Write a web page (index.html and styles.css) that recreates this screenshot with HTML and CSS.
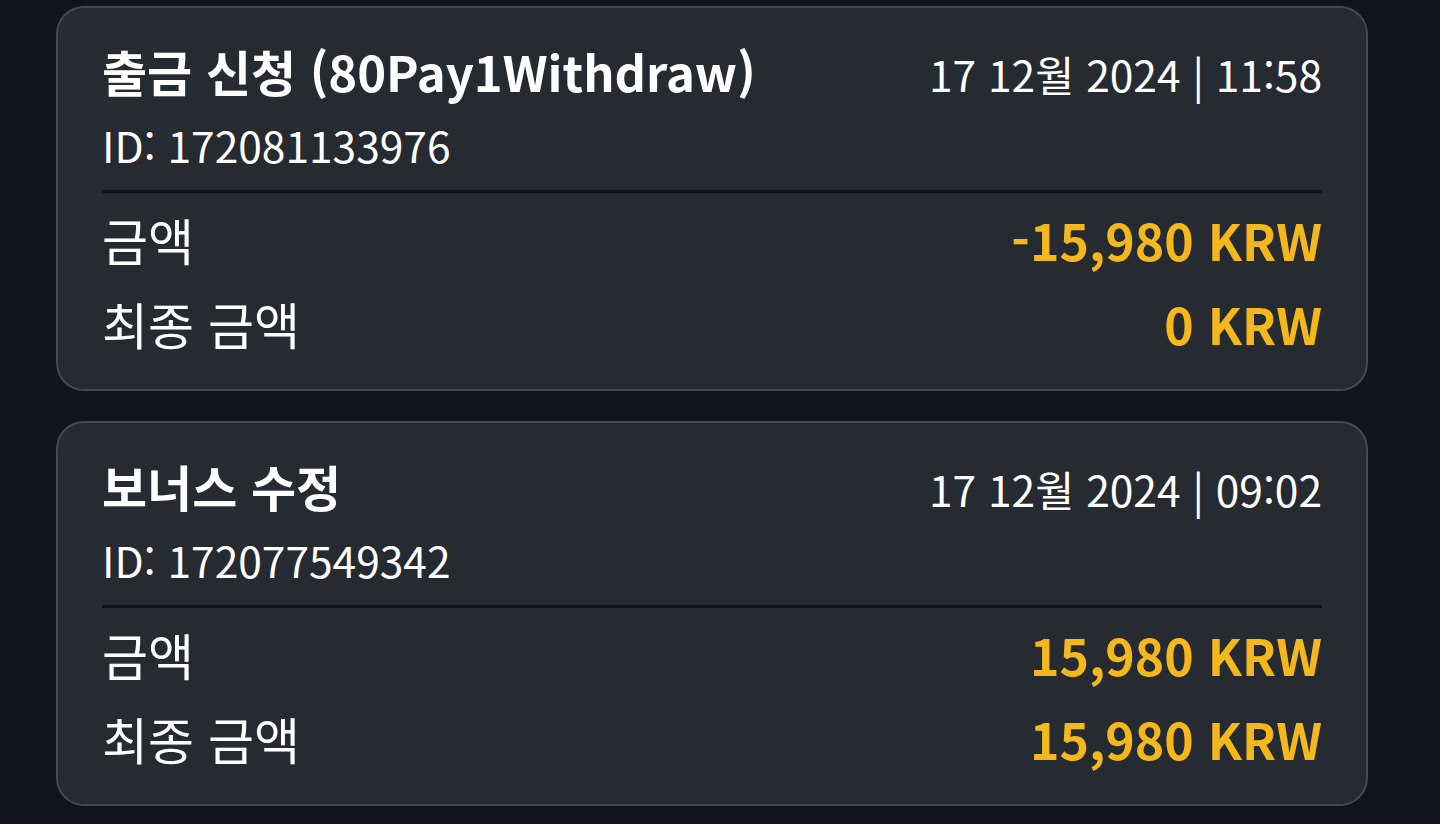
FILE: index.html
```html
<!DOCTYPE html>
<html lang="ko">
<head>
  <meta charset="UTF-8" />
  <title>거래 내역</title>
  <link rel="stylesheet" href="styles.css">
</head>
<body>
  <div class="lista">
    <div class="cartao">
      <div class="topo">
        <div class="titulo">출금 신청 (80Pay1Withdraw)</div>
        <div class="data">17 12월 2024 | 11:58</div>
      </div>
      <div class="id">ID: 172081133976</div>
      <div class="divisor"></div>
      <div class="linha">
        <span>금액</span>
        <span class="valor">-15,980 KRW</span>
      </div>
      <div class="linha">
        <span>최종 금액</span>
        <span class="valor">0 KRW</span>
      </div>
    </div>

    <div class="cartao">
      <div class="topo">
        <div class="titulo">보너스 수정</div>
        <div class="data">17 12월 2024 | 09:02</div>
      </div>
      <div class="id">ID: 172077549342</div>
      <div class="divisor"></div>
      <div class="linha">
        <span>금액</span>
        <span class="valor">15,980 KRW</span>
      </div>
      <div class="linha">
        <span>최종 금액</span>
        <span class="valor">15,980 KRW</span>
      </div>
    </div>
  </div>
</body>
</html>
```

FILE: styles.css
```css
body {
  margin: 0;
  font-family: "Noto Sans CJK KR", "Noto Sans", sans-serif;
  background: #10151b;
  color: #fff;
}

.lista {
  display: flex;
  flex-direction: column;
  gap: 30px;
  padding: 6px 72px 0 56px;
}

.cartao {
  background: #262a31;
  border: 2px solid #46494e;
  border-radius: 28px;
  padding: 33px 44px 36px 44px;
}

.topo {
  display: flex;
  justify-content: space-between;
  align-items: baseline;
}

.titulo {
  font-size: 49px;
  font-weight: bold;
  line-height: 60px;
}

.data {
  font-size: 42.5px;
  line-height: 56px;
}

.id {
  font-size: 42.5px;
  line-height: 56px;
  margin-top: 15px;
}

.divisor {
  height: 3px;
  background: #10141a;
  margin: 17px 0 16px 0;
}

.linha {
  display: flex;
  justify-content: space-between;
  font-size: 50px;
  line-height: 60px;
}

.linha + .linha {
  margin-top: 24px;
}

.valor {
  color: #f5b81c;
  font-weight: bold;
}
```
